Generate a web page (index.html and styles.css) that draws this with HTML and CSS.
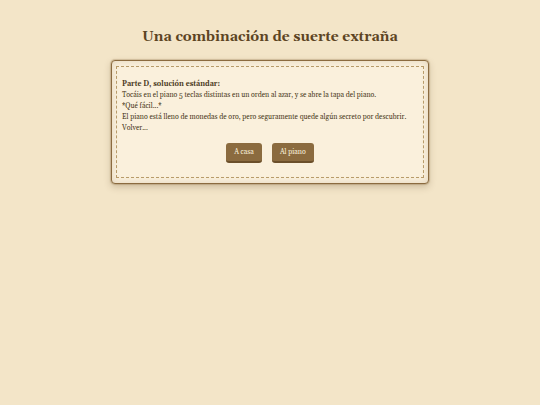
FILE: index.html
```
<!DOCTYPE html>
<html lang="es">
<head>
    <meta charset="UTF-8">
    <meta name="viewport" content="width=device-width, initial-scale=1.0">
    <title>Una combinación de suerte extraña</title>
    <link rel="stylesheet" href="styles.css">
</head>
<body>
    <h1>Una combinación de suerte extraña</h1>
    <main class="card">
        <div class="content">
            <p><strong>Parte D, solución estándar:</strong></p>
            <p>Tocáis en el piano 5 teclas distintas en un orden al azar, y se abre la tapa del piano.</p>
            <p>*Qué fácil...*</p>
            <p>El piano está lleno de monedas de oro, pero seguramente quede algún secreto por descubrir.</p>
            <p>Volver...</p>
            <div class="buttons">
                <button type="button">A casa</button>
                <button type="button">Al piano</button>
            </div>
        </div>
    </main>
</body>
</html>
```

FILE: styles.css
```
* {
    margin: 0;
    padding: 0;
    box-sizing: border-box;
}

body {
    font-family: Georgia, Gelasio, 'DejaVu Serif', serif;
    background-color: #f3e5c8;
    color: #4a3a22;
    padding: 27px 16px;
}

h1 {
    font-size: 14px;
    line-height: 20px;
    margin-bottom: 13px;
    color: #5c4423;
    text-align: center;
}

.card {
    max-width: 318px;
    margin: 0 auto;
    padding: 5px 4px;
    background-color: #faf0dc;
    border: 1px solid #8b6b3f;
    border-radius: 4px;
    box-shadow: 0 0 1px 1px rgba(139, 107, 63, 0.3), 0 3px 7px rgba(92, 68, 35, 0.25), inset 0 0 7px rgba(139, 107, 63, 0.2);
}

.content {
    padding: 12px 5px 14px;
    border: 1px dashed #b89b69;
}

p {
    font-size: 7px;
    line-height: 11px;
}

.buttons {
    display: flex;
    justify-content: center;
    gap: 10px;
    margin-top: 9px;
}

button {
    padding: 1px 8px 0;
    font-family: inherit;
    font-size: 7px;
    line-height: 17px;
    color: #f9f0dc;
    background-color: #8b6b3f;
    border: none;
    border-bottom: 2px solid #6b4f2a;
    border-radius: 3px;
    cursor: pointer;
}
```
